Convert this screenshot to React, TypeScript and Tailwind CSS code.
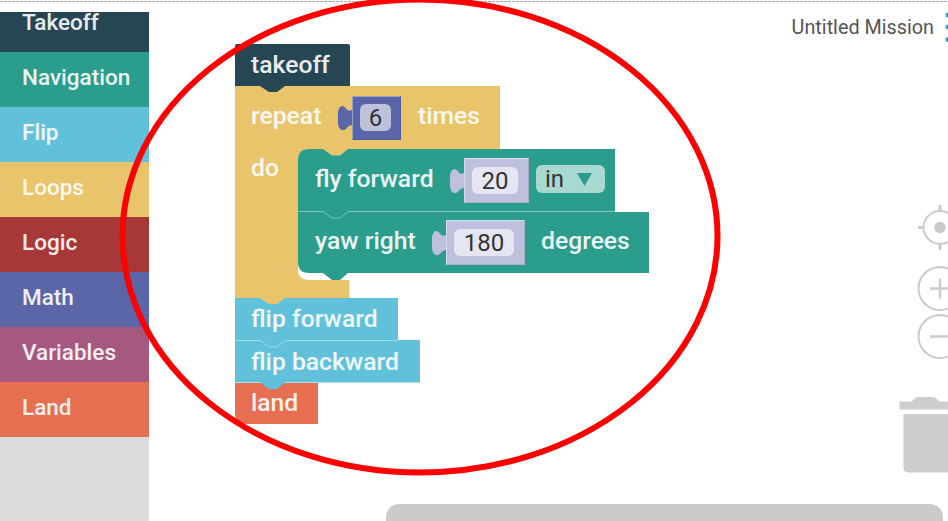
import type { ReactNode } from 'react';

const categories = [
  { name: 'Takeoff', style: 'h-10 bg-[#264653] pb-[19px]' },
  { name: 'Navigation', style: 'h-[55px] bg-[#2a9d8c] pb-[4px]' },
  { name: 'Flip', style: 'h-[55px] bg-[#62c1da] pb-[4px]' },
  { name: 'Loops', style: 'h-[55px] bg-[#e9c46a] pb-[4px]' },
  { name: 'Logic', style: 'h-[55px] bg-[#a73838] pb-[4px]' },
  { name: 'Math', style: 'h-[55px] bg-[#5a66a8] pb-[4px]' },
  { name: 'Variables', style: 'h-[55px] bg-[#a5597f] pb-[4px]' },
  { name: 'Land', style: 'h-[55px] bg-[#e66f51] pb-[4px]' },
];

function Sidebar() {
  return (
    <nav className="flex w-[149px] shrink-0 flex-col bg-[#dcdcdc]">
      {categories.map((c) => (
        <div
          key={c.name}
          className={`flex shrink-0 items-center pl-[22px] text-[22.5px] leading-none font-medium text-white/90 ${c.style}`}
        >
          {c.name}
        </div>
      ))}
    </nav>
  );
}

interface BlockProps {
  place: string;
  width: number;
  height: number;
  path: string;
  fill: string;
  edge?: string;
  children: ReactNode;
}

function Block({ place, width, height, path, fill, edge, children }: BlockProps) {
  return (
    <div className={`absolute ${place}`}>
      <svg className="absolute top-0 left-0 overflow-visible" width={width} height={height}>
        <path d={path} fill={fill} />
        {edge && <path d={edge} fill="none" stroke="#fff" strokeOpacity=".4" strokeWidth="1" />}
      </svg>
      <div className="relative flex h-full items-center whitespace-nowrap">{children}</div>
    </div>
  );
}

interface NumberBlockProps {
  value: string;
  size: string;
  field: string;
  fill: string;
}

function NumberBlock({ value, size, field, fill }: NumberBlockProps) {
  return (
    <div className={`flex shrink-0 items-center ${size}`}>
      <svg className="h-[26px] w-[15px] shrink-0" viewBox="0 0 15 26">
        <path d="M15 4C12 6.500 10 6 8 3.500C5 -1.500 0 1 0 9V17C0 24 4 27 8 24C10 21 12 19.500 15 20.500Z" fill={fill} />
      </svg>
      <div
        className="-ml-px flex h-full grow items-center border border-white/40 border-r-black/10 border-b-black/10 pl-[7px]"
        style={{ backgroundColor: fill }}
      >
        <span className={`flex h-[27px] items-center justify-center rounded-md bg-white/60 text-[24px] leading-none text-[#333] ${field}`}>
          {value}
        </span>
      </div>
    </div>
  );
}

const label = 'text-[24.700px] leading-none font-medium text-white/90';

function Workspace() {
  return (
    <>
      <Block
        place="left-[86px] top-[86px] h-[211px] w-[265px]"
        width={265}
        height={218}
        fill="#e9c46a"
        path="M0 0H265V63H113L105 70H97L88 63H74Q63 63 63 74V183Q63 194 74 194H114.5V212H50L42 218.500H34L25 212H0Z"
      >
        <div className="flex h-full flex-col">
          <div className="flex h-[63px] items-center pl-4">
            <span className={`w-[87px] pb-[3px] ${label}`}>repeat</span>
            <NumberBlock value="6" size="h-[44px] w-[63px]" field="w-[31px]" fill="#5a66a8" />
            <span className={`ml-[17px] pb-[3px] ${label}`}>times</span>
          </div>
          <span className={`mt-[7px] pl-4 ${label}`}>do</span>
        </div>
      </Block>

      <Block
        place="left-[86px] top-[44px] h-[42px] w-[115px]"
        width={115}
        height={49}
        fill="#264653"
        path="M0 2Q0 0 2 0H113Q115 0 115 2V42H50L42 48H34L25 42H0Z"
      >
        <span className={`pl-4 ${label}`}>takeoff</span>
      </Block>

      <Block
        place="left-[149px] top-[212px] h-[61px] w-[351px]"
        width={351}
        height={68}
        fill="#2a9d8c"
        path="M0 0H351V61H50L42 68H34L25 61H11Q0 61 0 50Z"
      >
        <span className={`box-content w-[117px] pb-[3px] pl-[17px] ${label}`}>yaw right</span>
        <NumberBlock value="180" size="h-[45px] w-[93px]" field="w-[60px]" fill="#bec1dd" />
        <span className={`ml-[16px] pb-[3px] ${label}`}>degrees</span>
      </Block>

      <Block
        place="left-[149px] top-[149px] h-[63px] w-[317px]"
        width={317}
        height={69}
        fill="#2a9d8c"
        path="M0 11Q0 0 11 0H25L34 6.500H42L50 0H317V63H50L42 69H34L25 63H0Z"
        edge="M0 62.500H25L34 69H42L50 62.500H317"
      >
        <span className={`box-content w-[135px] pb-[3px] pl-[17px] ${label}`}>fly forward</span>
        <NumberBlock value="20" size="h-[45px] w-[79px]" field="w-[46px]" fill="#bec1dd" />
        <span className="mb-[3px] ml-[7px] flex h-[28px] w-[69px] items-center rounded-md bg-[#a9d8d0] pl-[9px] text-[24px] leading-none text-[#333]">
          in
          <svg className="ml-[13px] h-[13px] w-[15px]" viewBox="0 0 15 13">
            <path d="M0 0H15L7.500 13Z" fill="#2a9d8c" />
          </svg>
        </span>
      </Block>

      <Block
        place="left-[86px] top-[383px] h-[41px] w-[83px]"
        width={83}
        height={41}
        fill="#e66f51"
        path="M0 0H83V41H11Q0 41 0 30Z"
      >
        <span className={`pl-4 ${label}`}>land</span>
      </Block>

      <Block
        place="left-[86px] top-[341px] h-[42px] w-[185px]"
        width={185}
        height={49}
        fill="#62c1da"
        path="M0 -1H185V41.500H50L42 48H34L25 41.500H0Z"
      >
        <span className={`pl-4 ${label}`}>flip backward</span>
      </Block>

      <Block
        place="left-[86px] top-[298px] h-[42px] w-[163px]"
        width={163}
        height={49}
        fill="#62c1da"
        path="M0 0H25L34 6H42L50 0H163V42H50L42 48H34L25 42H0Z"
        edge="M0 42.500H25L34 49H42L50 42.500H163"
      >
        <span className={`pl-4 ${label}`}>flip forward</span>
      </Block>
    </>
  );
}

function CanvasControls() {
  return (
    <svg className="absolute top-[200px] right-0" width="52" height="280" fill="none" stroke="#cbcbcb" strokeWidth="2">
      <circle cx="44" cy="27.500" r="16.500" />
      <path d="M44 5V11M44 44V50M22 27.500H28" strokeWidth="3" />
      <circle cx="44" cy="27.500" r="5.800" fill="#cbcbcb" stroke="none" />
      <circle cx="44" cy="88.500" r="21.500" />
      <path d="M44 78.500V98.500M34 88.500H54" strokeWidth="2.500" />
      <circle cx="44" cy="136.500" r="21.500" />
      <path d="M34 136.500H54" strokeWidth="2.500" />
      <path d="M3.500 201.500H16Q19 197 22 197H37Q40 197 43 201.500H52V209.500H3.500Z M7.500 214H52V272.500H12.500Q7.500 272.500 7.500 267.500Z" fill="#cdcdcd" stroke="none" />
    </svg>
  );
}

export default function App() {
  return (
    <div className="relative flex h-[521px] w-[948px] flex-col overflow-hidden bg-white font-['Roboto','Liberation_Sans',sans-serif]">
      <div className="mt-px h-px w-full shrink-0 bg-[repeating-linear-gradient(90deg,#aaa_0_3px,#eee_3px_4px)]" />
      <div className="mt-[10px] flex grow">
        <Sidebar />
        <main className="relative -mt-3 grow">
          <header className="flex h-[56px] items-center justify-end pr-[14px]">
            <h1 className="text-[19.800px] leading-none text-[#555]">Untitled Mission</h1>
          </header>
          <svg className="absolute top-3 right-0" width="4" height="32" fill="#3598db">
            <circle cx="4" cy="3" r="2.500" />
            <circle cx="4" cy="15" r="2.500" />
            <circle cx="4" cy="27.500" r="2.500" />
          </svg>
          <Workspace />
          <CanvasControls />
          <div className="absolute bottom-0 left-[237px] h-[17px] w-[557px] rounded-t-[13px] bg-[#cbcbcb]" />
        </main>
      </div>
      <svg className="pointer-events-none absolute inset-0" width="948" height="521">
        <ellipse cx="420" cy="236" rx="297.500" ry="236.500" fill="none" stroke="#ff0000" strokeWidth="6" />
      </svg>
    </div>
  );
}
